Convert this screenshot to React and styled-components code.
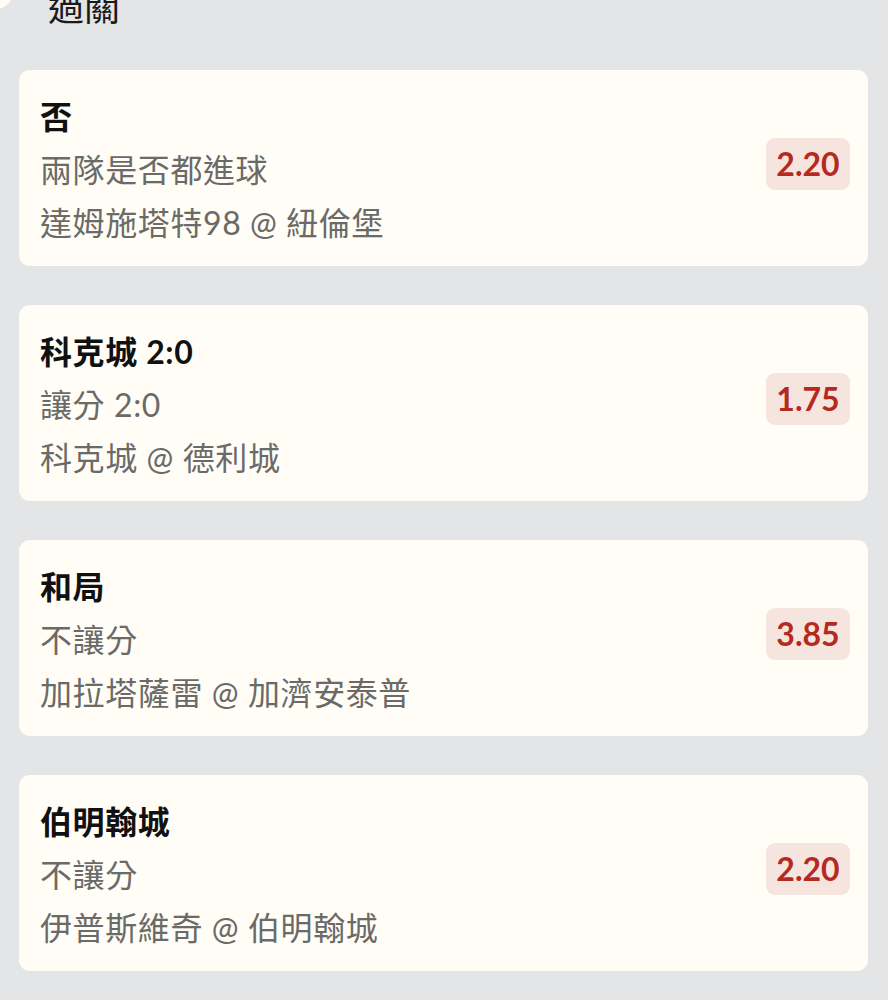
import React from "react";
import styled, { createGlobalStyle } from "styled-components";

const Global = createGlobalStyle`
  html, body { margin: 0; padding: 0; background: #e4e5e7; }
  body { font-family: Lato, "Noto Sans CJK TC", sans-serif; overflow: hidden; }
`;

const Page = styled.div`
  position: relative;
  width: 888px;
  min-height: 1000px;
  background: #e4e5e7;
  padding: 0 20px 0 19px;
  box-sizing: border-box;
  overflow: hidden;
`;

const CornerBlob = styled.div`
  position: absolute;
  left: -30px;
  top: -30px;
  width: 44px;
  height: 40px;
  border-radius: 50%;
  background: #fffdf5;
`;

const Header = styled.div`
  margin-top: -19px;
  padding-left: 29px;
  height: 89px;
  font-size: 36px;
  line-height: 48px;
  color: #1a1a1a;
  font-family: "Noto Sans CJK TC", sans-serif;
`;

const List = styled.div`
  display: flex;
  flex-direction: column;
  gap: 39px;
`;

const Card = styled.div`
  background: #fffdf5;
  border-radius: 11px;
  height: 196px;
  box-sizing: border-box;
  padding: 20px 18px 17px 21px;
  display: flex;
  align-items: center;
  justify-content: space-between;
`;

const Info = styled.div`
  display: flex;
  flex-direction: column;
`;

const Line = styled.div`
  font-family: Lato, "Noto Sans CJK TC", sans-serif;
  font-size: 32px;
  letter-spacing: 0.6px;
  line-height: 53px;
  height: 53px;
  white-space: nowrap;
  color: ${(p) => (p.$strong ? "#111111" : "#6a6a68")};
  font-weight: ${(p) => (p.$strong ? 700 : 400)};
`;

const Odds = styled.div`
  background: #f6e5df;
  border-radius: 9px;
  width: 84px;
  height: 52px;
  display: flex;
  align-items: center;
  justify-content: center;
  color: #b52a20;
  font-family: Lato, sans-serif;
  font-weight: 700;
  font-size: 32px;
  margin-top: -12px;
`;

const bets = [
  { pick: "否", market: "兩隊是否都進球", match: "達姆施塔特98 @ 紐倫堡", odds: "2.20" },
  { pick: "科克城 2:0", market: "讓分 2:0", match: "科克城 @ 德利城", odds: "1.75" },
  { pick: "和局", market: "不讓分", match: "加拉塔薩雷 @ 加濟安泰普", odds: "3.85" },
  { pick: "伯明翰城", market: "不讓分", match: "伊普斯維奇 @ 伯明翰城", odds: "2.20" },
];

export default function App() {
  return (
    <Page>
      <Global />
      <CornerBlob />
      <Header>過關</Header>
      <List>
        {bets.map((b, i) => (
          <Card key={i}>
            <Info>
              <Line $strong>{b.pick}</Line>
              <Line>{b.market}</Line>
              <Line>{b.match}</Line>
            </Info>
            <Odds>{b.odds}</Odds>
          </Card>
        ))}
      </List>
    </Page>
  );
}
